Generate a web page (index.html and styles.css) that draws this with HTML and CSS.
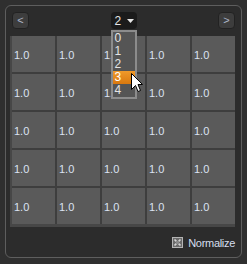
FILE: index.html
```html
<!DOCTYPE html>
<html>
<head>
<meta charset="utf-8">
<link rel="stylesheet" href="styles.css">
</head>
<body>
<div class="panel">
  <div class="header">
    <div class="navbtn">&lt;</div>
    <div class="combo">
      <span class="combo-val">2</span>
      <svg class="combo-arrow" width="7" height="4" viewBox="0 0 7 4"><path d="M0 0H7L3.5 4Z" fill="#e8e8e8"/></svg>
      <div class="list">
        <div class="item">0</div>
        <div class="item">1</div>
        <div class="item">2</div>
        <div class="item sel">3</div>
        <div class="item">4</div>
      </div>
    </div>
    <div class="navbtn">&gt;</div>
  </div>
  <div class="gridwrap">
    <div class="grid">
      <div class="cell">1.0</div><div class="cell">1.0</div><div class="cell">1.0</div><div class="cell">1.0</div><div class="cell">1.0</div>
      <div class="cell">1.0</div><div class="cell">1.0</div><div class="cell">1.0</div><div class="cell">1.0</div><div class="cell">1.0</div>
      <div class="cell">1.0</div><div class="cell">1.0</div><div class="cell">1.0</div><div class="cell">1.0</div><div class="cell">1.0</div>
      <div class="cell">1.0</div><div class="cell">1.0</div><div class="cell">1.0</div><div class="cell">1.0</div><div class="cell">1.0</div>
      <div class="cell">1.0</div><div class="cell">1.0</div><div class="cell">1.0</div><div class="cell">1.0</div><div class="cell">1.0</div>
    </div>
  </div>
  <div class="footer">
    <svg class="check" width="11" height="11" viewBox="0 0 11 11">
      <rect x="0.5" y="0.5" width="10" height="10" fill="#6a6a6a" stroke="#b4b4b4"/>
      <path d="M2.5 2.5L8.5 8.5M8.5 2.5L2.5 8.5" stroke="#d4d4d4" stroke-width="1.7"/>
      <rect x="4" y="4" width="3" height="3" fill="#8a8a8a"/>
    </svg>
    <span class="label">Normalize</span>
  </div>
  <svg class="cursor" width="12" height="19" viewBox="0 0 12 19">
    <path d="M0.5 0.5V16.5L4.5 12.5L7 18.5L9.5 17.5L7 11.5H11.5Z" fill="#fff" stroke="#000" stroke-width="1" stroke-linejoin="miter"/>
  </svg>
</div>
</body>
</html>
```
FILE: styles.css
```css
html, body {
  margin: 0;
  padding: 0;
}
body {
  width: 247px;
  height: 264px;
  background: #2f2f2f;
  font-family: "Liberation Sans", Arial, sans-serif;
  font-size: 11px;
  color: #d6deee;
  overflow: hidden;
}
.panel {
  position: relative;
  box-sizing: border-box;
  margin: 5px 0 0 5px;
  width: 237px;
  height: 253px;
  border: 1px solid #5e5e5e;
  border-radius: 6px;
  background: #2c2c2c;
  display: flex;
  flex-direction: column;
}
.header {
  height: 30px;
  box-sizing: border-box;
  padding: 6px 6px 0 6px;
  display: flex;
  justify-content: space-between;
  align-items: flex-start;
}
.navbtn {
  box-sizing: border-box;
  width: 17px;
  height: 17px;
  border: 1px solid #222;
  border-radius: 4px;
  background: #3d3d3d;
  color: #aeb6c8;
  font-size: 11px;
  line-height: 15px;
  text-align: center;
}
.combo {
  position: relative;
  box-sizing: border-box;
  width: 26px;
  height: 17px;
  border-radius: 4px;
  background: #1b1b1b;
  display: flex;
  align-items: center;
  padding-left: 4px;
  gap: 6px;
  color: #e6e6e6;
  font-size: 12px;
}
.combo-arrow {
  display: block;
}
.list {
  position: absolute;
  left: 0;
  top: 18px;
  width: 26px;
  box-sizing: border-box;
  border: 2px solid #8c8c8c;
  background: #555;
  z-index: 2;
}
.item {
  height: 13px;
  line-height: 13px;
  padding-left: 2px;
  color: #e4e4e4;
  font-size: 12px;
}
.item.sel {
  background: linear-gradient(#f09a2a, #d9780e);
  color: #fff;
}
.gridwrap {
  margin-left: 4px;
  width: 225px;
  box-sizing: border-box;
  padding: 0 0 3px 2px;
  background: #474747;
}
.grid {
  display: grid;
  grid-template-columns: repeat(5, 43px);
  grid-auto-rows: 36px;
  gap: 2px;
  background: #3e3e3e;
}
.cell {
  background: #5a5a5a;
  display: flex;
  align-items: center;
  padding-left: 2px;
  padding-top: 1px;
  color: #dbe2f2;
}
.footer {
  flex: 1;
  display: flex;
  align-items: center;
  justify-content: flex-end;
  padding-right: 6px;
  padding-top: 1px;
  gap: 5px;
}
.check {
  display: block;
}
.label {
  color: #d6deee;
  letter-spacing: -0.3px;
}
.cursor {
  position: absolute;
  left: 125px;
  top: 67px;
  z-index: 3;
}
```
